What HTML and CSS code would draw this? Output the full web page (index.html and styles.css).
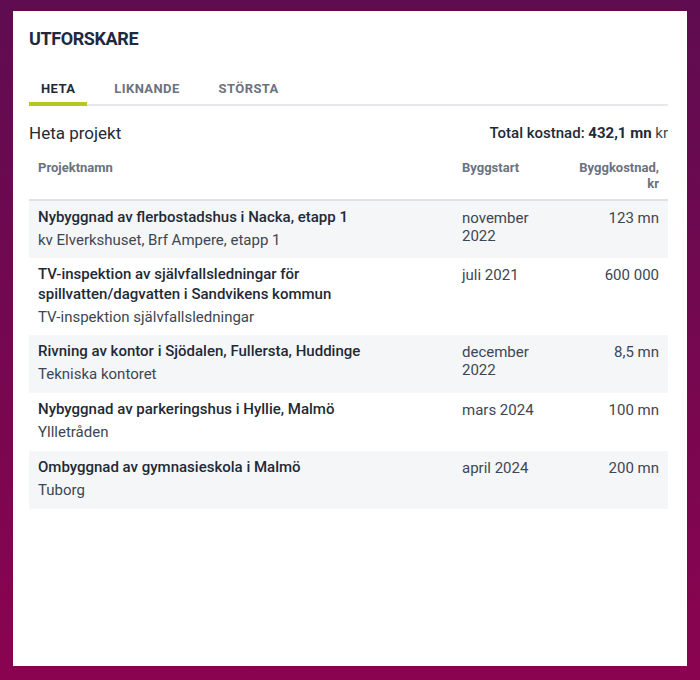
FILE: index.html
```html
<!DOCTYPE html>
<html lang="sv">
  <head>
    <meta charset="UTF-8" />
    <meta name="viewport" content="width=device-width, initial-scale=1.0" />
    <title>Utforskare</title>
    <link rel="stylesheet" href="styles.css">
  </head>
  <body>
    <div class="card">
      <h1 class="title">UTFORSKARE</h1>

      <div class="tabs">
        <button class="tab active">HETA</button>
        <button class="tab">LIKNANDE</button>
        <button class="tab">STÖRSTA</button>
      </div>

      <div class="summary">
        <h2>Heta projekt</h2>
        <span class="total">Total kostnad: <strong>432,1 mn</strong> <span class="unit">kr</span></span>
      </div>

      <table class="projects">
        <colgroup>
          <col>
          <col class="col-start">
          <col class="col-cost">
        </colgroup>
        <thead>
          <tr>
            <th>Projektnamn</th>
            <th>Byggstart</th>
            <th class="num">Byggkostnad, kr</th>
          </tr>
        </thead>
        <tbody>
          <tr>
            <td>
              <div class="name">Nybyggnad av flerbostadshus i Nacka, etapp 1</div>
              <div class="sub">kv Elverkshuset, Brf Ampere, etapp 1</div>
            </td>
            <td class="meta">november 2022</td>
            <td class="meta num">123 mn</td>
          </tr>
          <tr>
            <td>
              <div class="name">TV-inspektion av självfallsledningar för spillvatten/dagvatten i Sandvikens kommun</div>
              <div class="sub">TV-inspektion självfallsledningar</div>
            </td>
            <td class="meta">juli 2021</td>
            <td class="meta num">600 000</td>
          </tr>
          <tr>
            <td>
              <div class="name">Rivning av kontor i Sjödalen, Fullersta, Huddinge</div>
              <div class="sub">Tekniska kontoret</div>
            </td>
            <td class="meta">december 2022</td>
            <td class="meta num">8,5 mn</td>
          </tr>
          <tr>
            <td>
              <div class="name">Nybyggnad av parkeringshus i Hyllie, Malmö</div>
              <div class="sub">Yllletråden</div>
            </td>
            <td class="meta">mars 2024</td>
            <td class="meta num">100 mn</td>
          </tr>
          <tr>
            <td>
              <div class="name">Ombyggnad av gymnasieskola i Malmö</div>
              <div class="sub">Tuborg</div>
            </td>
            <td class="meta">april 2024</td>
            <td class="meta num">200 mn</td>
          </tr>
        </tbody>
      </table>
    </div>
  </body>
</html>
```

FILE: styles.css
```css
html, body {
  margin: 0;
  height: 100%;
}

body {
  font-family: Roboto, "Liberation Sans", sans-serif;
  background: linear-gradient(180deg, #5f0c50 0%, #8a0350 100%);
  padding: 11px 13px 14px;
  box-sizing: border-box;
  color: #1f2a37;
}

.card {
  background: #fff;
  height: 655px;
  box-sizing: border-box;
  padding: 16px 19px 16px 16px;
}

.title {
  margin: 0;
  font-size: 18px;
  line-height: 24px;
  font-weight: 700;
  color: #1e2a3f;
  letter-spacing: -0.4px;
}

.tabs {
  display: flex;
  gap: 15px;
  margin-top: 20px;
  border-bottom: 2px solid #e6e8ec;
}

.tab {
  font-family: inherit;
  font-size: 13px;
  line-height: 16px;
  font-weight: 700;
  letter-spacing: 0.4px;
  color: #6b7280;
  background: none;
  border: 0;
  border-bottom: 4px solid transparent;
  margin-bottom: -2px;
  padding: 10px 12px 5px;
  cursor: pointer;
}

.tab.active {
  color: #1f2a37;
  border-bottom-color: #b6c81e;
}

.summary {
  display: flex;
  justify-content: space-between;
  align-items: center;
  margin-top: 15px;
  height: 24px;
}

.summary h2 {
  margin: 0;
  font-size: 17px;
  font-weight: 400;
  color: #1f2a37;
}

.total {
  font-size: 15px;
  font-weight: 500;
  color: #1f2a37;
}

.total strong {
  font-weight: 700;
}

.total .unit {
  font-weight: 400;
  color: #3d4654;
}

.projects {
  width: 100%;
  margin-top: 7px;
  border-collapse: collapse;
  table-layout: fixed;
}

.col-start {
  width: 112px;
}

.col-cost {
  width: 103px;
}

.projects th {
  font-size: 13px;
  line-height: 16px;
  font-weight: 700;
  color: #6b7280;
  text-align: left;
  vertical-align: top;
  padding: 8px 9px 7px;
  border-bottom: 2px solid #dfe2e7;
}

.projects tbody tr {
  height: 58px;
}

.projects td {
  vertical-align: top;
  padding: 6px 9px 8px;
}

.projects tbody tr:nth-child(odd) {
  background: #f5f6f8;
}

.projects .num {
  text-align: right;
}

.name {
  font-size: 15px;
  line-height: 20px;
  font-weight: 500;
  color: #1f2a37;
}

.sub {
  margin-top: 3px;
  font-size: 15px;
  line-height: 20px;
  color: #3d4654;
}

.projects td.meta {
  padding-top: 8px;
  font-size: 15px;
  line-height: 18px;
  color: #3d4654;
}
```
